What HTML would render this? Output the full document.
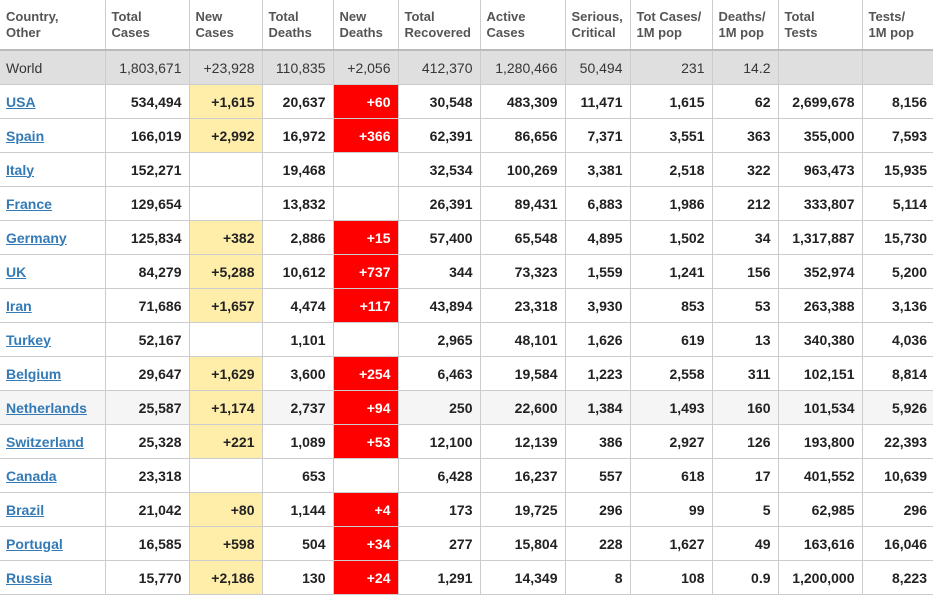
<!DOCTYPE html>
<html><head><meta charset="utf-8"><style>
body{margin:0;width:933px;height:596px;overflow:hidden;background:#fff;font-family:"Liberation Sans",Arial,sans-serif;}
table{border-collapse:collapse;table-layout:fixed;position:absolute;left:0;top:0;width:934px;}
td,th{border-left:1px solid #ccc;border-bottom:1px solid #ccc;height:33px;padding:0 7px 0 6px;text-align:right;font-size:14px;font-weight:bold;color:#222;white-space:nowrap;overflow:hidden;}
th{height:50px;text-align:left;vertical-align:top;padding-top:9px;box-sizing:border-box;font-size:13px;color:#555;line-height:16px;border-bottom:2px solid #bbb;white-space:normal;}
tr td:first-child,tr th:first-child{border-left:none;text-align:left;}
td a{color:#337ab7;text-decoration:underline;}
.w td{background:#dfdfdf;font-weight:normal;color:#363636;font-size:14px}
.y{background:#ffeeaa}
.r{background:#ff0000;color:#fff}
.g td{background:#f5f5f5}
.g td.y{background:#ffeeaa}.g td.r{background:#ff0000}
</style></head><body>
<table>
<colgroup><col style="width:105px"><col style="width:84px"><col style="width:73px"><col style="width:71px"><col style="width:65px"><col style="width:82px"><col style="width:85px"><col style="width:65px"><col style="width:82px"><col style="width:66px"><col style="width:84px"><col style="width:72px"></colgroup>
<tr><th>Country,<br>Other</th><th>Total<br>Cases</th><th>New<br>Cases</th><th>Total<br>Deaths</th><th>New<br>Deaths</th><th>Total<br>Recovered</th><th>Active<br>Cases</th><th>Serious,<br>Critical</th><th>Tot Cases/<br>1M pop</th><th>Deaths/<br>1M pop</th><th>Total<br>Tests</th><th>Tests/<br>1M pop</th></tr>
<tr class="w"><td>World</td><td>1,803,671</td><td>+23,928</td><td>110,835</td><td>+2,056</td><td>412,370</td><td>1,280,466</td><td>50,494</td><td>231</td><td>14.2</td><td></td><td></td></tr>
<tr><td><a>USA</a></td><td>534,494</td><td class="y">+1,615</td><td>20,637</td><td class="r">+60</td><td>30,548</td><td>483,309</td><td>11,471</td><td>1,615</td><td>62</td><td>2,699,678</td><td>8,156</td></tr>
<tr><td><a>Spain</a></td><td>166,019</td><td class="y">+2,992</td><td>16,972</td><td class="r">+366</td><td>62,391</td><td>86,656</td><td>7,371</td><td>3,551</td><td>363</td><td>355,000</td><td>7,593</td></tr>
<tr><td><a>Italy</a></td><td>152,271</td><td></td><td>19,468</td><td></td><td>32,534</td><td>100,269</td><td>3,381</td><td>2,518</td><td>322</td><td>963,473</td><td>15,935</td></tr>
<tr><td><a>France</a></td><td>129,654</td><td></td><td>13,832</td><td></td><td>26,391</td><td>89,431</td><td>6,883</td><td>1,986</td><td>212</td><td>333,807</td><td>5,114</td></tr>
<tr><td><a>Germany</a></td><td>125,834</td><td class="y">+382</td><td>2,886</td><td class="r">+15</td><td>57,400</td><td>65,548</td><td>4,895</td><td>1,502</td><td>34</td><td>1,317,887</td><td>15,730</td></tr>
<tr><td><a>UK</a></td><td>84,279</td><td class="y">+5,288</td><td>10,612</td><td class="r">+737</td><td>344</td><td>73,323</td><td>1,559</td><td>1,241</td><td>156</td><td>352,974</td><td>5,200</td></tr>
<tr><td><a>Iran</a></td><td>71,686</td><td class="y">+1,657</td><td>4,474</td><td class="r">+117</td><td>43,894</td><td>23,318</td><td>3,930</td><td>853</td><td>53</td><td>263,388</td><td>3,136</td></tr>
<tr><td><a>Turkey</a></td><td>52,167</td><td></td><td>1,101</td><td></td><td>2,965</td><td>48,101</td><td>1,626</td><td>619</td><td>13</td><td>340,380</td><td>4,036</td></tr>
<tr><td><a>Belgium</a></td><td>29,647</td><td class="y">+1,629</td><td>3,600</td><td class="r">+254</td><td>6,463</td><td>19,584</td><td>1,223</td><td>2,558</td><td>311</td><td>102,151</td><td>8,814</td></tr>
<tr class="g"><td><a>Netherlands</a></td><td>25,587</td><td class="y">+1,174</td><td>2,737</td><td class="r">+94</td><td>250</td><td>22,600</td><td>1,384</td><td>1,493</td><td>160</td><td>101,534</td><td>5,926</td></tr>
<tr><td><a>Switzerland</a></td><td>25,328</td><td class="y">+221</td><td>1,089</td><td class="r">+53</td><td>12,100</td><td>12,139</td><td>386</td><td>2,927</td><td>126</td><td>193,800</td><td>22,393</td></tr>
<tr><td><a>Canada</a></td><td>23,318</td><td></td><td>653</td><td></td><td>6,428</td><td>16,237</td><td>557</td><td>618</td><td>17</td><td>401,552</td><td>10,639</td></tr>
<tr><td><a>Brazil</a></td><td>21,042</td><td class="y">+80</td><td>1,144</td><td class="r">+4</td><td>173</td><td>19,725</td><td>296</td><td>99</td><td>5</td><td>62,985</td><td>296</td></tr>
<tr><td><a>Portugal</a></td><td>16,585</td><td class="y">+598</td><td>504</td><td class="r">+34</td><td>277</td><td>15,804</td><td>228</td><td>1,627</td><td>49</td><td>163,616</td><td>16,046</td></tr>
<tr><td><a>Russia</a></td><td>15,770</td><td class="y">+2,186</td><td>130</td><td class="r">+24</td><td>1,291</td><td>14,349</td><td>8</td><td>108</td><td>0.9</td><td>1,200,000</td><td>8,223</td></tr>
</table>
</body></html>
